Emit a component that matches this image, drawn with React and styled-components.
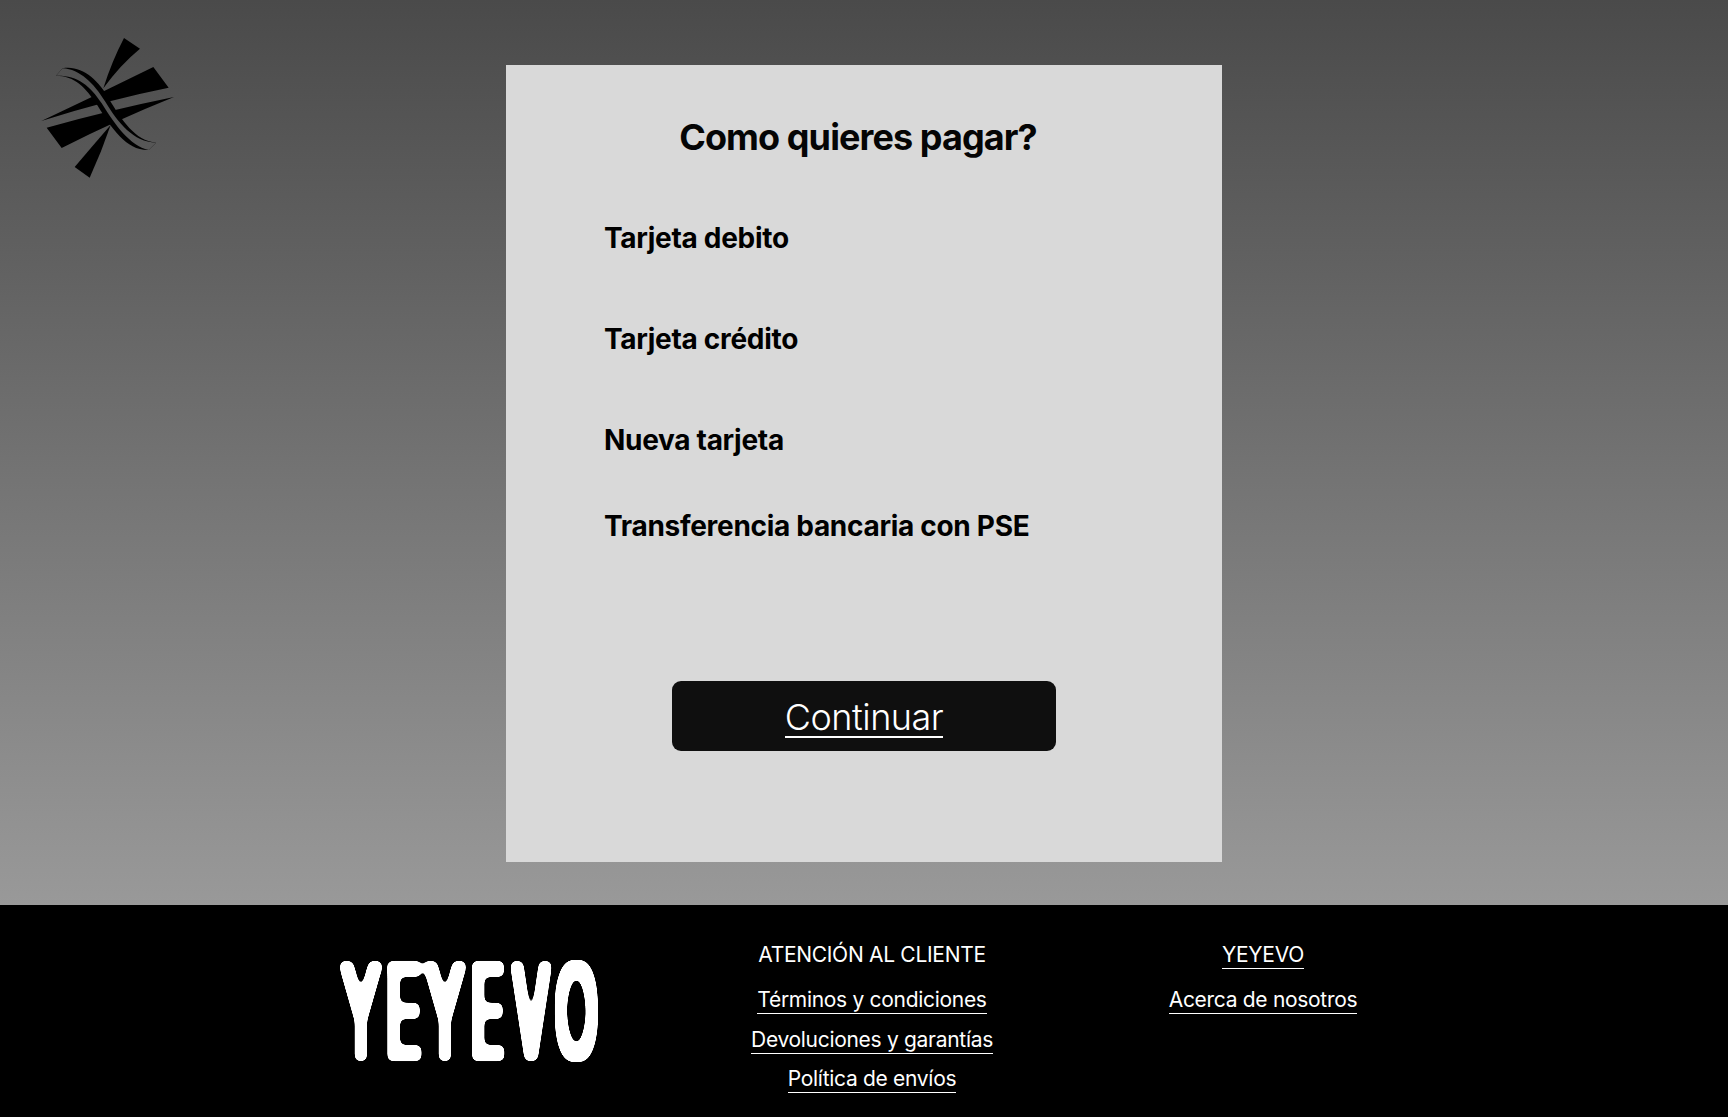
import React from 'react';
import styled, { createGlobalStyle } from 'styled-components';

const GlobalStyle = createGlobalStyle`
    html, body {
        margin: 0;
        padding: 0;
    }

    body {
        font-family: "Inter", "Liberation Sans", sans-serif;
        background-color: #000000;
    }
`;

const Page = styled.div`
    display: flex;
    flex-direction: column;
    width: 100%;
    min-height: 1117px;
`;

const Main = styled.main`
    display: grid;
    grid-template-columns: 1fr 716px 1fr;
    height: 905px;
    padding-top: 65px;
    box-sizing: border-box;
    background: linear-gradient(180deg, #4a4a4a 0%, #999999 100%);
`;

const BrandMark = styled.svg`
    display: block;
    width: 170px;
    height: 170px;
    margin: -45px 0 0 20px;
`;

const Card = styled.section`
    display: flex;
    flex-direction: column;
    height: 797px;
    box-sizing: border-box;
    padding: 50px 0 0 98px;
    background-color: #d9d9d9;
`;

const Title = styled.h1`
    width: 508px;
    margin: 0 0 62px;
    font-size: 36px;
    line-height: 44px;
    font-weight: 700;
    letter-spacing: -0.9px;
    text-align: center;
    color: #050505;
`;

const Methods = styled.ul`
    display: flex;
    flex-direction: column;
    margin: 0;
    padding: 0;
    list-style: none;
`;

const Method = styled.li`
    height: ${props => props.rowHeight}px;
    font-size: 28px;
    line-height: 34px;
    font-weight: 700;
    letter-spacing: -0.3px;
    color: #000000;
`;

const ContinueButton = styled.button`
    display: flex;
    align-items: center;
    justify-content: center;
    width: 384px;
    height: 70px;
    margin: 86px 0 0 68px;
    padding: 3px 0 0;
    border: 0;
    border-radius: 9px;
    font-family: inherit;
    font-size: 36px;
    font-weight: 300;
    letter-spacing: -0.5px;
    color: #ffffff;
    background-color: #0f0f0f;
`;

const ContinueLabel = styled.span`
    border-bottom: 2px solid #ffffff;
    line-height: 38px;
`;

const Footer = styled.footer`
    display: flex;
    align-items: flex-start;
    height: 212px;
    box-sizing: border-box;
    padding: 37px 0 0 335px;
    background-color: #000000;
    color: #ffffff;
`;

const Wordmark = styled.svg`
    display: block;
    width: 270px;
    height: 170px;
    margin: -17px 117px 0 0;
`;

const FooterColumn = styled.nav`
    display: flex;
    flex-direction: column;
    align-items: center;
    width: ${props => props.columnWidth}px;
    margin-right: ${props => props.gap}px;
`;

const FooterHeading = styled.span`
    height: 26px;
    margin-bottom: 18px;
    font-size: 21px;
    line-height: 26px;
    font-weight: 400;
    letter-spacing: -0.3px;
    border-bottom: 1px solid ${props => props.underlined ? "#ffffff" : "transparent"};
`;

const FooterLink = styled.a`
    height: 26px;
    margin-bottom: 12.5px;
    font-size: 21px;
    line-height: 26px;
    font-weight: 400;
    letter-spacing: -0.3px;
    color: #ffffff;
    text-decoration: none;
    border-bottom: 1px solid #ffffff;
`;

const letters = [
    { char: "Y", x: 342.5, stretch: 0.95 },
    { char: "E", x: 386, stretch: 1.02 },
    { char: "Y", x: 426.5, stretch: 0.95 },
    { char: "E", x: 471, stretch: 0.95 },
    { char: "V", x: 513.5, stretch: 0.9 },
    { char: "O", x: 555.5, stretch: 0.95 },
];

export default function App() {
    return (
        <Page>
            <GlobalStyle />
            <Main>
                <div>
                    <BrandMark viewBox="0 0 510 510">
                        <defs>
                            <mask id="swooshGap">
                                <rect width="510" height="510" fill="white" />
                                <path d="M128 145 C180 148 222 190 255 244 C295 310 340 366 408 368 L386 390 C330 378 285 315 245 250 C210 195 170 165 108 167 Z" fill="black" />
                            </mask>
                        </defs>
                        <g mask="url(#swooshGap)" fill="#000000">
                            <path d="M312 54 L360 86 Q300 135 250 205 Q275 125 312 54 Z" />
                            <path d="M164 441 L209 473 Q245 395 272 315 Q220 375 164 441 Z" />
                            <path d="M64 303 Q230 225 400 141 L446 203 Q260 240 64 303 Z" />
                            <path d="M462 231 Q270 270 80 323 L125 384 Q290 300 462 231 Z" />
                            <path d="M128 145 C185 135 235 180 267 237 C305 300 345 362 408 368 L386 390 C320 392 275 325 233 257 C195 200 165 168 108 167 Z" />
                        </g>
                    </BrandMark>
                </div>
                <Card>
                    <Title>Como quieres pagar?</Title>
                    <Methods>
                        <Method rowHeight={101}>Tarjeta debito</Method>
                        <Method rowHeight={101}>Tarjeta crédito</Method>
                        <Method rowHeight={86}>Nueva tarjeta</Method>
                        <Method rowHeight={86}>Transferencia bancaria con PSE</Method>
                    </Methods>
                    <ContinueButton>
                        <ContinueLabel>Continuar</ContinueLabel>
                    </ContinueButton>
                </Card>
                <div />
            </Main>
            <Footer>
                <Wordmark viewBox="335 925 270 170">
                    <defs>
                        {/* grow the strokes evenly, then blur + threshold to round the ends */}
                        <filter id="roundCorners" x="-5%" y="-5%" width="110%" height="110%">
                            <feMorphology operator="dilate" radius="3.5" />
                            <feGaussianBlur stdDeviation="3" />
                            <feColorMatrix values="1 0 0 0 0  0 1 0 0 0  0 0 1 0 0  0 0 0 16 -7" />
                        </filter>
                    </defs>
                    <g filter="url(#roundCorners)">
                        {letters.map((letter, index) => (
                            <text
                                key={index}
                                transform={`translate(${letter.x} 1057) scale(${letter.stretch} 2.17)`}
                                fontFamily="Inter, sans-serif"
                                fontSize="58"
                                fontWeight="300"
                                fill="#ffffff"
                            >
                                {letter.char}
                            </text>
                        ))}
                    </g>
                </Wordmark>
                <FooterColumn columnWidth={300} gap={91}>
                    <FooterHeading>ATENCIÓN AL CLIENTE</FooterHeading>
                    <FooterLink href="#">Términos y condiciones</FooterLink>
                    <FooterLink href="#">Devoluciones y garantías</FooterLink>
                    <FooterLink href="#">Política de envíos</FooterLink>
                </FooterColumn>
                <FooterColumn columnWidth={300} gap={0}>
                    <FooterHeading underlined>YEYEVO</FooterHeading>
                    <FooterLink href="#">Acerca de nosotros</FooterLink>
                </FooterColumn>
            </Footer>
        </Page>
    );
}
